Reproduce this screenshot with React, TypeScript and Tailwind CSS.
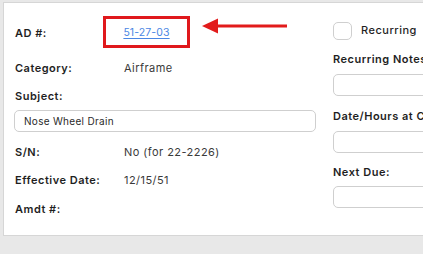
import React from "react";

const F = { fontFamily: "Inter, 'Noto Sans', sans-serif" };

function Label({ children, className = "" }: { children: React.ReactNode; className?: string }) {
  return (
    <div className={`text-[11px] leading-[16px] font-semibold tracking-[0.5px] text-[#1f1f1f] whitespace-nowrap ${className}`}>
      {children}
    </div>
  );
}

function Value({ children }: { children: React.ReactNode }) {
  return <div className="text-[11px] leading-[16px] tracking-[0.45px] text-[#3a3a3a] whitespace-nowrap">{children}</div>;
}

export default function App() {
  return (
    <div style={F} className="w-[423px] h-[254px] bg-[#e8e8e8] pt-[2px] pl-[3px] overflow-hidden">
      <div className="h-[234px] bg-white border-t border-l border-b border-[#d6d6d6] flex overflow-hidden">
        {/* Left column */}
        <div className="w-[329px] shrink-0 pl-[11px] flex flex-col">
          <div className="mt-[13px] h-[32px] flex items-center pt-[2px]">
            <div className="w-[88px]"><Label>AD #:</Label></div>
            <div className="relative w-[87px] h-[32px] -mt-[2px] border-[3px] border-[#e0181c] flex items-center justify-center pt-[2px]">
              <span className="text-[10.5px] leading-[16px] tracking-[0.1px] text-[#4a86e4] underline underline-offset-2">51-27-03</span>
              <svg className="absolute left-[96px] top-[-1px]" width="90" height="18" viewBox="0 0 90 18">
                <polygon points="0,8 16,0.5 16,15.5" fill="#e21b1b" />
                <rect x="14" y="6.5" width="71" height="3" fill="#e21b1b" />
              </svg>
            </div>
          </div>
          <div className="mt-[12px] flex">
            <div className="w-[109px]"><Label>Category:</Label></div>
            <Value>Airframe</Value>
          </div>
          <Label className="mt-[12px]">Subject:</Label>
          <div className="mt-[6px] ml-[-1px] w-[302px] h-[22px] border border-[#cfcfcf] rounded-[5px] flex items-center pl-[9px] text-[10px] tracking-[0.3px] text-[#2a2a2a]">
            Nose Wheel Drain
          </div>
          <div className="mt-[12px] flex">
            <div className="w-[109px]"><Label>S/N:</Label></div>
            <Value>No (for 22-2226)</Value>
          </div>
          <div className="mt-[12px] flex">
            <div className="w-[109px]"><Label>Effective Date:</Label></div>
            <Value>12/15/51</Value>
          </div>
          <div className="mt-[13px] flex">
            <Label>Amdt #:</Label>
          </div>
        </div>
        {/* Right column */}
        <div className="w-[200px] shrink-0 flex flex-col">
          <div className="mt-[19px] flex items-center">
            <div className="w-[19px] h-[18px] border border-[#cfcfcf] rounded-[5px] bg-white" />
            <div className="ml-[9px] -mt-[3px] text-[11px] leading-[16px] font-medium tracking-[0.5px] text-[#1f1f1f]">Recurring</div>
          </div>
          <Label className="mt-[11px]">Recurring Notes:</Label>
          <div className="mt-[7px] w-[200px] h-[22px] border border-[#cfcfcf] rounded-[5px]" />
          <Label className="mt-[12px]">Date/Hours at Compliance:</Label>
          <div className="mt-[7px] w-[200px] h-[22px] border border-[#cfcfcf] rounded-[5px]" />
          <Label className="mt-[11px]">Next Due:</Label>
          <div className="mt-[6px] w-[200px] h-[22px] border border-[#cfcfcf] rounded-[5px]" />
        </div>
      </div>
    </div>
  );
}
